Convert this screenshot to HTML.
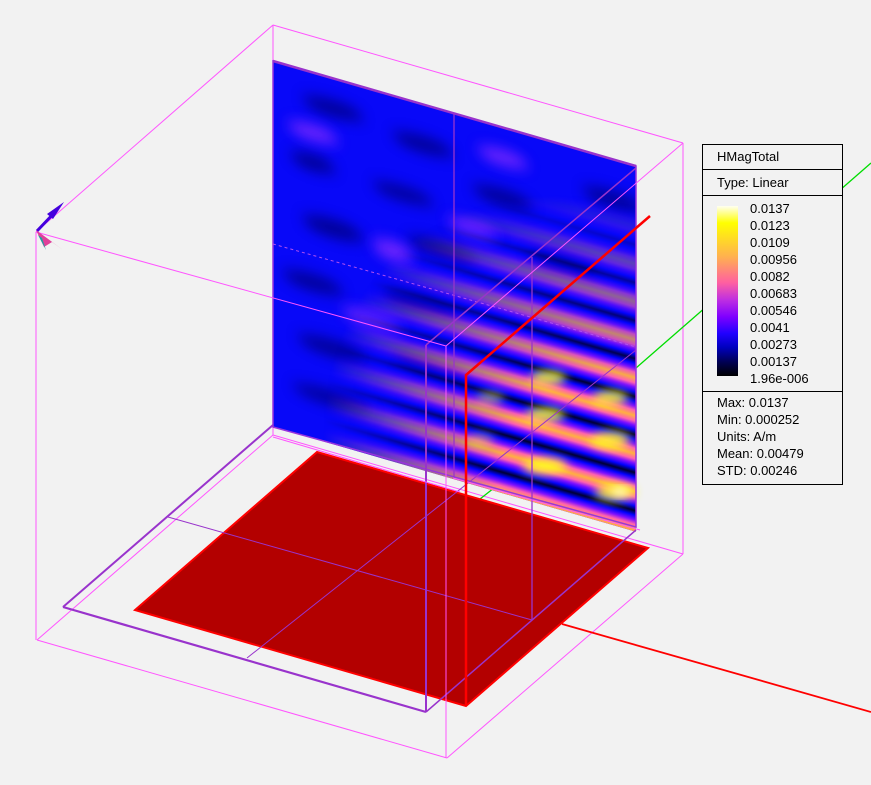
<!DOCTYPE html>
<html><head><meta charset="utf-8"><style>
html,body{margin:0;padding:0;background:#f2f2f2;}
#wrap{position:relative;width:871px;height:785px;overflow:hidden;background:#f2f2f2;font-family:"Liberation Sans",Arial,sans-serif;}
svg{position:absolute;left:0;top:0}
.lg{position:absolute;left:702px;top:144px;width:139px;height:339px;border:1px solid #000;background:#f2f2f2;font-size:13px;color:#000;}
.lg div{position:absolute;white-space:nowrap;line-height:17px}
</style></head><body><div id="wrap">
<svg width="871" height="785" viewBox="0 0 871 785">
<defs>
<clipPath id="pc"><rect x="0" y="0" width="363" height="366"/></clipPath>
<filter id="bl" x="-50%" y="-50%" width="200%" height="200%"><feGaussianBlur stdDeviation="7"/></filter>
<filter id="bl2" x="-50%" y="-50%" width="200%" height="200%"><feGaussianBlur stdDeviation="5"/></filter>
<linearGradient id="sg" x1="0" y1="0" x2="0" y2="1">
<stop offset="0" stop-color="#000030"/><stop offset=".12" stop-color="#0000ff"/>
<stop offset=".25" stop-color="#8010ff"/><stop offset=".36" stop-color="#ff60b0"/>
<stop offset=".5" stop-color="#ffb040"/><stop offset=".64" stop-color="#ff60b0"/>
<stop offset=".75" stop-color="#8010ff"/><stop offset=".88" stop-color="#0000ff"/>
<stop offset="1" stop-color="#000030"/></linearGradient>
<pattern id="st" patternUnits="userSpaceOnUse" x="0" y="3" width="400" height="38">
<rect width="400" height="38" fill="url(#sg)"/></pattern>
<radialGradient id="mg" gradientUnits="userSpaceOnUse" cx="370" cy="360" r="320">
<stop offset="0" stop-color="#fff"/><stop offset=".45" stop-color="#fff"/><stop offset=".75" stop-color="#777"/><stop offset="1" stop-color="#000"/></radialGradient>
<mask id="mk"><rect x="0" y="0" width="363" height="366" fill="url(#mg)"/></mask>
</defs>

<g stroke="#ff55ff" stroke-width="1" fill="none">
<line x1="273" y1="25" x2="683" y2="143"/>
<line x1="273" y1="25" x2="36" y2="232"/>
<line x1="273" y1="25" x2="273" y2="435"/>
<line x1="273" y1="435" x2="683" y2="554"/>
<line x1="273" y1="435" x2="37" y2="640"/>
<line x1="683" y1="143" x2="683" y2="554"/>
</g>
<line x1="636" y1="368" x2="871" y2="163" stroke="#00dd00" stroke-width="1.3"/>
<line x1="480" y1="499" x2="494" y2="488" stroke="#00dd00" stroke-width="1.3"/>

<g transform="matrix(1 0.289 0 1 273 61)">
<g clip-path="url(#pc)">
<rect x="0" y="0" width="363" height="366" fill="#0808f8"/>
<g filter="url(#bl)" fill="#00007a" opacity=".8">
<ellipse cx="60" cy="30" rx="30" ry="8"/><ellipse cx="150" cy="40" rx="30" ry="8"/>
<ellipse cx="40" cy="90" rx="22" ry="8"/><ellipse cx="130" cy="95" rx="30" ry="7"/>
<ellipse cx="230" cy="70" rx="30" ry="8"/><ellipse cx="60" cy="150" rx="30" ry="9"/>
<ellipse cx="170" cy="140" rx="35" ry="8"/><ellipse cx="290" cy="120" rx="35" ry="7"/>
<ellipse cx="40" cy="210" rx="30" ry="8"/><ellipse cx="150" cy="200" rx="40" ry="8"/>
<ellipse cx="60" cy="270" rx="35" ry="8"/><ellipse cx="160" cy="260" rx="40" ry="7"/>
<ellipse cx="60" cy="320" rx="40" ry="7"/><ellipse cx="340" cy="40" rx="30" ry="8"/>
</g>
<g filter="url(#bl)" fill="#9a30ff" opacity=".7">
<ellipse cx="120" cy="155" rx="20" ry="10"/><ellipse cx="200" cy="110" rx="25" ry="8"/>
<ellipse cx="230" cy="30" rx="25" ry="8"/><ellipse cx="100" cy="230" rx="30" ry="8"/>
<ellipse cx="40" cy="60" rx="25" ry="8"/>
</g>
<rect x="0" y="0" width="400" height="400" fill="url(#st)" mask="url(#mk)"/>
</g>
</g>
<g filter="url(#bl2)" fill="#ffff20" opacity=".9">
<ellipse cx="615" cy="492" rx="20" ry="8"/><ellipse cx="545" cy="466" rx="22" ry="8"/>
<ellipse cx="610" cy="440" rx="20" ry="8"/><ellipse cx="545" cy="415" rx="20" ry="7"/>
<ellipse cx="610" cy="398" rx="18" ry="7"/><ellipse cx="548" cy="378" rx="18" ry="7"/>
<ellipse cx="490" cy="398" rx="14" ry="6" opacity=".6"/><ellipse cx="480" cy="440" rx="14" ry="6" opacity=".5"/>
</g>
<ellipse cx="620" cy="492" rx="8" ry="4" fill="#fffff0" filter="url(#bl2)"/>
<polygon points="273,61 636,166 636,527 273,427" fill="none" stroke="#9933dd" stroke-width="1.5"/>
<line x1="273" y1="61" x2="636" y2="166" stroke="#9933cc" stroke-width="2.5"/>
<line x1="273" y1="244" x2="636" y2="347" stroke="#b050f0" stroke-width="1" stroke-dasharray="3,3"/>

<polygon points="317,452 648,548 466,706 135,610" fill="#b30000" stroke="#ff0000" stroke-width="2"/>

<g stroke="#9933cc" fill="none">
<line x1="63" y1="607" x2="273" y2="425" stroke-width="2"/>
<line x1="63" y1="607" x2="426" y2="712" stroke-width="2.2"/>
<line x1="426" y1="712" x2="426" y2="345" stroke-width="2"/>
<line x1="426" y1="345" x2="636" y2="168" stroke-width="1.5"/>
<line x1="426" y1="712" x2="636" y2="530" stroke-width="1.5"/>
<line x1="454" y1="114" x2="454" y2="478" stroke-width="1.3"/>
<line x1="532" y1="257" x2="532" y2="620" stroke-width="1.3"/>
<line x1="168" y1="517" x2="532" y2="620" stroke-width="1"/>
<line x1="247" y1="658" x2="636" y2="350" stroke-width="1"/>
</g>
<g stroke="#ff55ff" stroke-width="1" fill="none">
<line x1="36" y1="232" x2="36" y2="640"/>
<line x1="36" y1="232" x2="446" y2="346"/>
<line x1="446" y1="346" x2="683" y2="143"/>
<line x1="446" y1="346" x2="446" y2="758"/>
<line x1="37" y1="640" x2="447" y2="758"/>
<line x1="447" y1="758" x2="683" y2="554"/>
<line x1="273" y1="437" x2="460" y2="492"/>
<line x1="453" y1="478" x2="640" y2="530"/>
</g>
<g stroke="#ff0000" stroke-width="2.5" fill="none">
<polyline points="466,706 466,375 650,216"/>
</g>
<line x1="562" y1="624" x2="871" y2="712" stroke="#ff0000" stroke-width="1.8"/>

<line x1="37" y1="231" x2="56" y2="211" stroke="#4400dd" stroke-width="3"/>
<polygon points="64,202 47,214 53,219" fill="#4400dd"/>
<polygon points="36,230 63,250 52,242 44,247" fill="#e0409a"/>
<polygon points="38,235 46,250 42,238" fill="#20a0a0"/>
</svg>

<div class="lg">
<div style="left:14px;top:3px">HMagTotal</div>
<div style="left:0;top:24px;width:139px;border-top:1px solid #000"></div>
<div style="left:14px;top:29px">Type: Linear</div>
<div style="left:0;top:50px;width:139px;border-top:1px solid #000"></div>
<div style="left:14px;top:61px;width:21px;height:170px;background:linear-gradient(to bottom,#fffff0 0%,#ffff00 10%,#ffb050 30%,#ff60a0 45%,#c030e0 55%,#8000ff 65%,#2000ff 75%,#0000c0 83%,#000050 92%,#000 100%)"></div>
<div style="left:47px;top:55px;line-height:17px">0.0137<br>0.0123<br>0.0109<br>0.00956<br>0.0082<br>0.00683<br>0.00546<br>0.0041<br>0.00273<br>0.00137<br>1.96e-006</div>
<div style="left:0;top:246px;width:139px;border-top:1px solid #000"></div>
<div style="left:14px;top:249px">Max: 0.0137<br>Min: 0.000252<br>Units: A/m<br>Mean: 0.00479<br>STD: 0.00246</div>
</div>
</div></body></html>
